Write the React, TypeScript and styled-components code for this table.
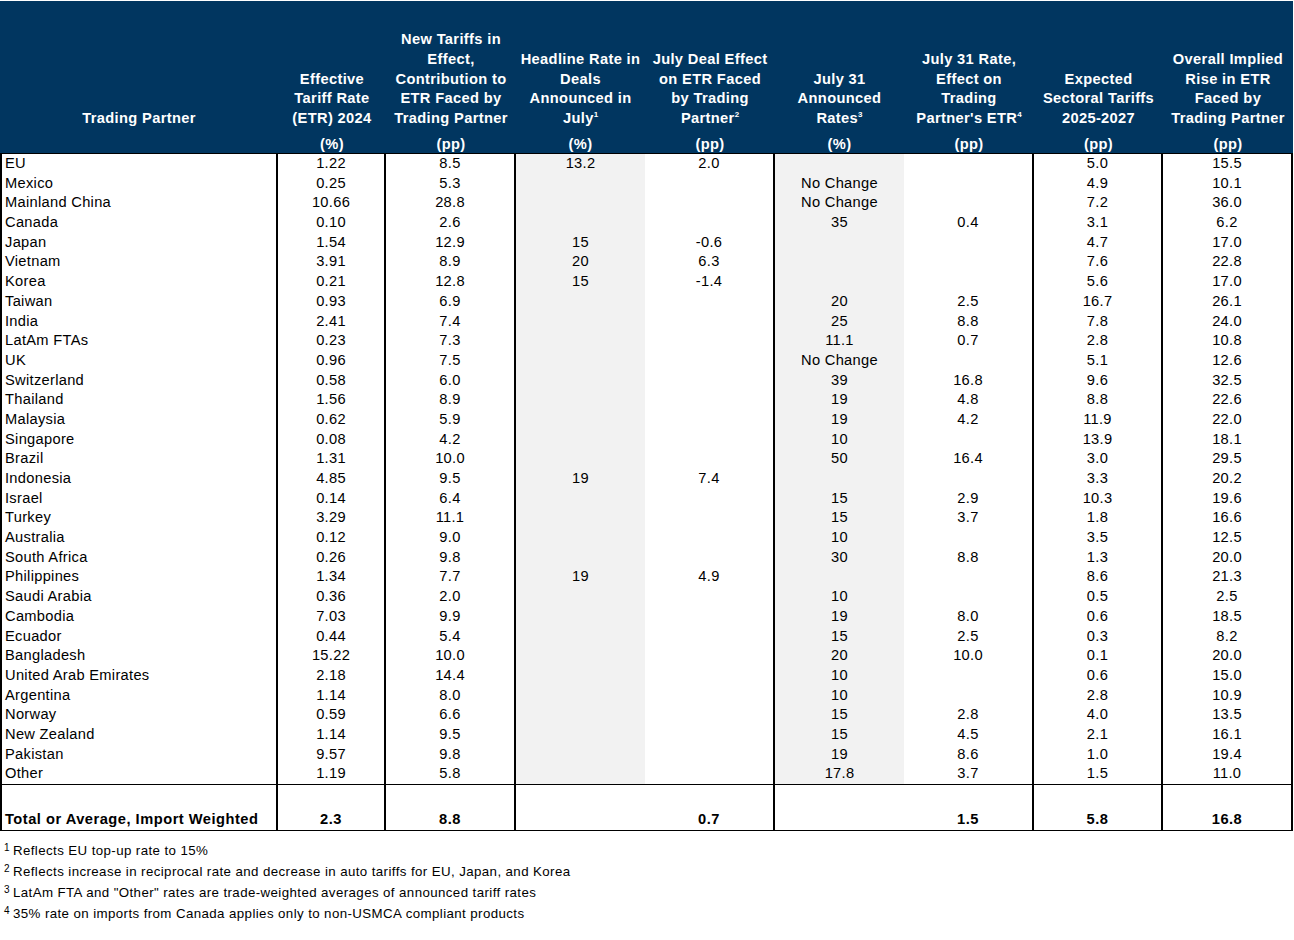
import React from "react";
import styled, { createGlobalStyle } from "styled-components";

const Global = createGlobalStyle`
  html, body { margin: 0; padding: 0; background: #ffffff; }
  body { font-family: "Liberation Sans", Arial, sans-serif; color: #000; }
`;

const COLS = "278px 108px 130px 129px 130px 129px 130px 129px 130px";

const Page = styled.div`
  width: 1294px;
  height: 940px;
  overflow: hidden;
`;

const Table = styled.div`
  width: 1293px;
`;

const HeaderRow = styled.div`
  display: grid;
  grid-template-columns: ${COLS};
  height: 153px;
  background: #013660;
  border-bottom: 1px solid #000;
  box-sizing: border-box;
  margin-top: 1px;
`;

const HeadCell = styled.div`
  display: flex;
  flex-direction: column;
  justify-content: flex-end;
  align-items: center;
  text-align: center;
  color: #ffffff;
  font-weight: bold;
  font-size: 14.67px;
  letter-spacing: 0.35px;
`;

const HeadTitle = styled.div`
  line-height: 19.8px;
  margin-bottom: 7px;
  white-space: nowrap;
`;

const HeadUnit = styled.div`
  line-height: 17px;
  min-height: 17px;
`;

const Sup = styled.sup`
  font-size: 8px;
  vertical-align: 6px;
  line-height: 0;
  letter-spacing: 0;
`;

const Body = styled.div`
  border-left: 2px solid #000;
  border-bottom: 1px solid #000;
`;

const Row = styled.div<{ $total?: boolean }>`
  display: grid;
  grid-template-columns: ${COLS};
  margin-left: -2px;
  height: ${(p) => (p.$total ? "46px" : "19.69px")};
  border-top: ${(p) => (p.$total ? "1px solid #000" : "none")};
  box-sizing: border-box;
`;

const Cell = styled.div<{ $shade?: boolean; $divider?: boolean; $left?: boolean; $total?: boolean }>`
  display: flex;
  align-items: ${(p) => (p.$total ? "flex-end" : "flex-start")};
  justify-content: ${(p) => (p.$left ? "flex-start" : "center")};
  padding-left: ${(p) => (p.$left ? "3px" : "0")};
  padding-top: ${(p) => (p.$total ? "0" : "1px")};
  padding-bottom: ${(p) => (p.$total ? "2px" : "0")};
  background: ${(p) => (p.$shade ? "#f2f2f2" : "transparent")};
  border-right: ${(p) => (p.$divider ? "2px solid #000" : "none")};
  box-sizing: border-box;
  font-size: 14.67px;
  line-height: 17px;
  letter-spacing: ${(p) => (p.$total ? "0.5px" : "0.3px")};
  font-weight: ${(p) => (p.$total ? "bold" : "normal")};
  white-space: nowrap;
  overflow: hidden;
`;

const FirstCell = styled(Cell)`
  border-left: 2px solid #000;
`;

const Notes = styled.div`
  padding: 9px 0 0 4px;
  font-size: 13.3px;
  letter-spacing: 0.4px;
`;

const Note = styled.div`
  height: 21px;
  line-height: 21px;
  white-space: nowrap;
  &:nth-child(n + 3) {
    height: 20.5px;
  }
`;

const NoteMark = styled.span`
  font-size: 10px;
  line-height: 0;
  vertical-align: 4px;
  margin-right: 3px;
`;

type H = { lines: React.ReactNode; unit: string };

const headers: H[] = [
  { lines: <>Trading Partner</>, unit: "" },
  { lines: <>Effective<br />Tariff Rate<br />(ETR) 2024</>, unit: "(%)" },
  { lines: <>New Tariffs in<br />Effect,<br />Contribution to<br />ETR Faced by<br />Trading Partner</>, unit: "(pp)" },
  { lines: <>Headline Rate in<br />Deals<br />Announced in<br />July<Sup>1</Sup></>, unit: "(%)" },
  { lines: <>July Deal Effect<br />on ETR Faced<br />by Trading<br />Partner<Sup>2</Sup></>, unit: "(pp)" },
  { lines: <>July 31<br />Announced<br />Rates<Sup>3</Sup></>, unit: "(%)" },
  { lines: <>July 31 Rate,<br />Effect on<br />Trading<br />Partner's ETR<Sup>4</Sup></>, unit: "(pp)" },
  { lines: <>Expected<br />Sectoral Tariffs<br />2025-2027</>, unit: "(pp)" },
  { lines: <>Overall Implied<br />Rise in ETR<br />Faced by<br />Trading Partner</>, unit: "(pp)" },
];

const data: string[][] = [
  ["EU", "1.22", "8.5", "13.2", "2.0", "", "", "5.0", "15.5"],
  ["Mexico", "0.25", "5.3", "", "", "No Change", "", "4.9", "10.1"],
  ["Mainland China", "10.66", "28.8", "", "", "No Change", "", "7.2", "36.0"],
  ["Canada", "0.10", "2.6", "", "", "35", "0.4", "3.1", "6.2"],
  ["Japan", "1.54", "12.9", "15", "-0.6", "", "", "4.7", "17.0"],
  ["Vietnam", "3.91", "8.9", "20", "6.3", "", "", "7.6", "22.8"],
  ["Korea", "0.21", "12.8", "15", "-1.4", "", "", "5.6", "17.0"],
  ["Taiwan", "0.93", "6.9", "", "", "20", "2.5", "16.7", "26.1"],
  ["India", "2.41", "7.4", "", "", "25", "8.8", "7.8", "24.0"],
  ["LatAm FTAs", "0.23", "7.3", "", "", "11.1", "0.7", "2.8", "10.8"],
  ["UK", "0.96", "7.5", "", "", "No Change", "", "5.1", "12.6"],
  ["Switzerland", "0.58", "6.0", "", "", "39", "16.8", "9.6", "32.5"],
  ["Thailand", "1.56", "8.9", "", "", "19", "4.8", "8.8", "22.6"],
  ["Malaysia", "0.62", "5.9", "", "", "19", "4.2", "11.9", "22.0"],
  ["Singapore", "0.08", "4.2", "", "", "10", "", "13.9", "18.1"],
  ["Brazil", "1.31", "10.0", "", "", "50", "16.4", "3.0", "29.5"],
  ["Indonesia", "4.85", "9.5", "19", "7.4", "", "", "3.3", "20.2"],
  ["Israel", "0.14", "6.4", "", "", "15", "2.9", "10.3", "19.6"],
  ["Turkey", "3.29", "11.1", "", "", "15", "3.7", "1.8", "16.6"],
  ["Australia", "0.12", "9.0", "", "", "10", "", "3.5", "12.5"],
  ["South Africa", "0.26", "9.8", "", "", "30", "8.8", "1.3", "20.0"],
  ["Philippines", "1.34", "7.7", "19", "4.9", "", "", "8.6", "21.3"],
  ["Saudi Arabia", "0.36", "2.0", "", "", "10", "", "0.5", "2.5"],
  ["Cambodia", "7.03", "9.9", "", "", "19", "8.0", "0.6", "18.5"],
  ["Ecuador", "0.44", "5.4", "", "", "15", "2.5", "0.3", "8.2"],
  ["Bangladesh", "15.22", "10.0", "", "", "20", "10.0", "0.1", "20.0"],
  ["United Arab Emirates", "2.18", "14.4", "", "", "10", "", "0.6", "15.0"],
  ["Argentina", "1.14", "8.0", "", "", "10", "", "2.8", "10.9"],
  ["Norway", "0.59", "6.6", "", "", "15", "2.8", "4.0", "13.5"],
  ["New Zealand", "1.14", "9.5", "", "", "15", "4.5", "2.1", "16.1"],
  ["Pakistan", "9.57", "9.8", "", "", "19", "8.6", "1.0", "19.4"],
  ["Other", "1.19", "5.8", "", "", "17.8", "3.7", "1.5", "11.0"],
];

const total = ["Total or Average, Import Weighted", "2.3", "8.8", "", "0.7", "", "1.5", "5.8", "16.8"];

const dividers = [true, true, true, false, true, false, true, true, true];
const shaded = [false, false, false, true, false, true, false, false, false];

const notes: [string, string][] = [
  ["1", "Reflects EU top-up rate to 15%"],
  ["2", "Reflects increase in reciprocal rate and decrease in auto tariffs for EU, Japan, and Korea"],
  ["3", "LatAm FTA and \"Other\" rates are trade-weighted averages of announced tariff rates"],
  ["4", "35% rate on imports from Canada applies only to non-USMCA compliant products"],
];

function DataRow({ values, total: isTotal }: { values: string[]; total?: boolean }) {
  return (
    <Row $total={isTotal}>
      {values.map((v, i) => {
        const C = i === 0 ? FirstCell : Cell;
        return (
          <C
            key={i}
            $left={i === 0}
            $divider={dividers[i]}
            $shade={!isTotal && shaded[i]}
            $total={isTotal}
          >
            {v}
          </C>
        );
      })}
    </Row>
  );
}

export default function App() {
  return (
    <Page>
      <Global />
      <Table>
        <HeaderRow>
          {headers.map((h, i) => (
            <HeadCell key={i}>
              <HeadTitle>{h.lines}</HeadTitle>
              <HeadUnit>{h.unit}</HeadUnit>
            </HeadCell>
          ))}
        </HeaderRow>
        <Body>
          {data.map((r) => (
            <DataRow key={r[0]} values={r} />
          ))}
          <DataRow values={total} total />
        </Body>
      </Table>
      <Notes>
        {notes.map(([m, t]) => (
          <Note key={m}>
            <NoteMark>{m}</NoteMark>
            {t}
          </Note>
        ))}
      </Notes>
    </Page>
  );
}
